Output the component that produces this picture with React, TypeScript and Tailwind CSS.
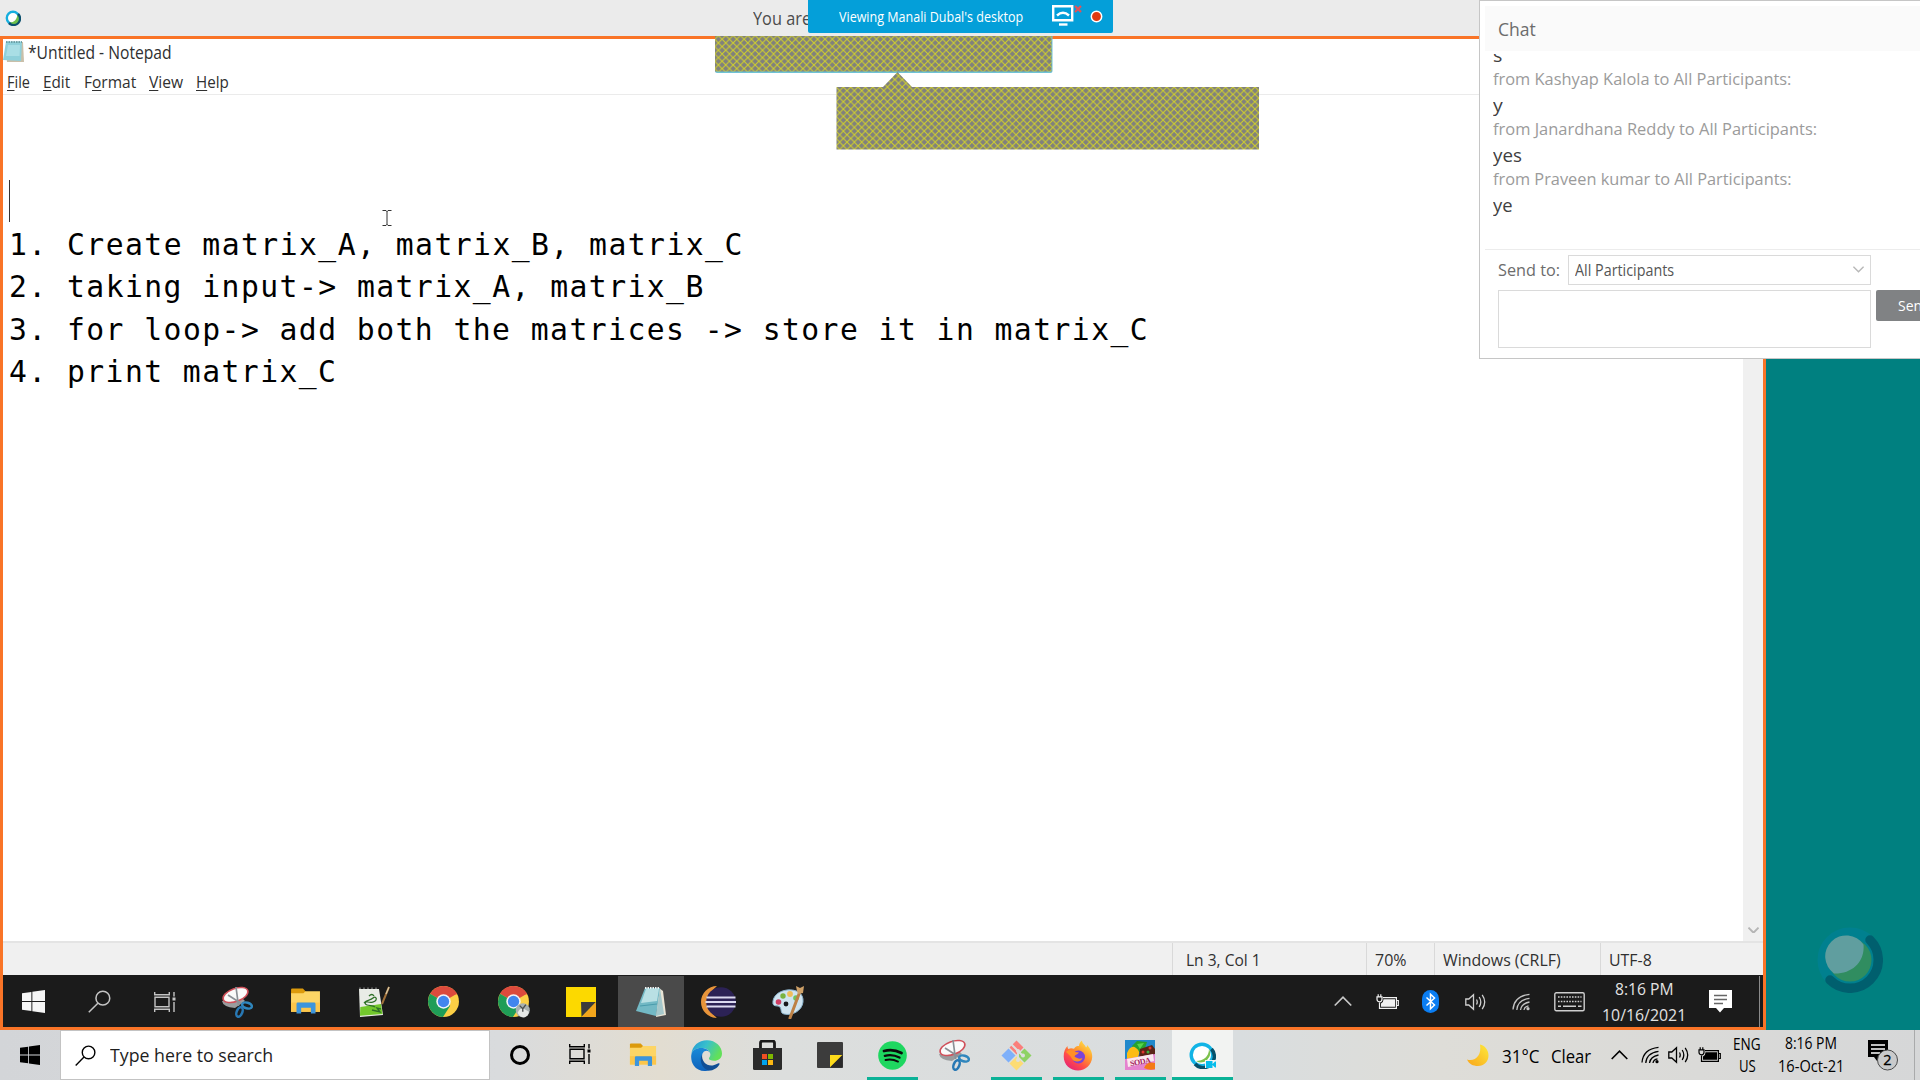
import React, { useLayoutEffect, useRef, useState } from "react";

/** Text stretched horizontally to an exact width. */
function Fit({ w, className = "", children }: { w: number; className?: string; children: React.ReactNode }) {
  const ref = useRef<HTMLSpanElement>(null);
  const [k, setK] = useState(1);
  useLayoutEffect(() => {
    if (ref.current && ref.current.offsetWidth) setK(w / ref.current.offsetWidth);
  }, [w]);
  return (
    <span className={"block shrink-0 " + className} style={{ width: w }}>
      <span ref={ref} className="inline-block origin-left whitespace-pre" style={{ transform: `scaleX(${k})` }}>
        {children}
      </span>
    </span>
  );
}

const WinLogo = ({ s, c }: { s: number; c: string }) => (
  <svg width={s} height={s} viewBox="0 0 24 24" fill={c}>
    <path d="M0 3.4 9.8 2v9.5H0zM10.8 1.9 24 0v11.5H10.8zM0 12.5h9.8V22L0 20.6zM10.8 12.5H24V24l-13.2-1.9z" />
  </svg>
);

const SearchGlyph = ({ s, c }: { s: number; c: string }) => (
  <svg width={s} height={s} viewBox="0 0 24 24" fill="none" stroke={c} strokeWidth="1.6">
    <circle cx="15.5" cy="8.5" r="7.2" />
    <path d="M10.3 13.8.8 23.3" />
  </svg>
);

const TaskView = ({ c }: { c: string }) => (
  <svg width="24" height="22" viewBox="0 0 24 22" fill="none" stroke={c} strokeWidth="1.4">
    <path d="M2 6.2h14v9.6H2zM1.7 1v2.8h14.6V1M1.7 21v-2.8h14.6V21M21 1v4.5M21 11v10" />
    <path d="M19.5 6.5h3v3h-3z" fill={c} stroke="none" />
  </svg>
);

const Snip = () => (
  <svg width="32" height="32" viewBox="0 0 32 32">
    <path d="M1 15q1 6 13 7l10-7-4-4z" fill="#9a9c9e" />
    <ellipse cx="14.5" cy="9" rx="13" ry="6.5" transform="rotate(-20 14.5 9)" fill="#fafafa" stroke="#d0505a" strokeWidth="1.6" />
    <path d="m15 1 2.5 19M7 9l14 9" stroke="#8b9096" strokeWidth="1.7" />
    <ellipse cx="26" cy="19.5" rx="5" ry="2.8" transform="rotate(15 26 19.5)" fill="none" stroke="#2f86bd" strokeWidth="2.5" />
    <ellipse cx="18.5" cy="26" rx="2.8" ry="5" transform="rotate(22 18.5 26)" fill="none" stroke="#2878b4" strokeWidth="2.5" />
  </svg>
);

const Folder = ({ s }: { s: number }) => (
  <svg width={s} height={s * 0.84} viewBox="0 0 30 25">
    <path d="M1 1.5Q1 .5 2 .5h10.5L15 3v3H1z" fill="#dc9a0c" />
    <path d="M1 5h12l2-2h14v20H1z" fill="#fdd565" />
    <path d="M1 14h28v9H1z" fill="#fcc64b" />
    <path d="M6.3 24.5v-9.2q0-1.3 1.3-1.3h15.800q1.300 0 1.300 1.300v9.200h-4.500v-5.500h-9.400v5.500z" fill="#3d95dc" />
  </svg>
);

const NotepadPP = () => (
  <svg width="32" height="32" viewBox="0 0 32 32">
    <path d="M1 3h20l4 26-23 2z" fill="#e9ece6" />
    <path d="M2.300 21 23 18l1.500 10-22.500 1.800z" fill="#72c72c" />
    <path d="M2 3v-1.500M6 3v-1.500M10 3v-1.500M14 3v-1.500M18 3v-1.500" stroke="#aaa" />
    <path d="M6 17c3-4 6-2 9-5 2-2 4 0 3 2s-5 3-8 2-4 2-1 3 6 0 8 2M11 10q3-3 5 0M14 24l8 2-3-4 4 1" stroke="#2f7028" strokeWidth="1.300" fill="none" />
    <path d="M31 1 24 18" stroke="#a1713a" strokeWidth="2" />
    <path d="m31 1-3 7" stroke="#d9c9a4" strokeWidth="1.300" />
  </svg>
);

const Chrome = ({ badge = false }: { badge?: boolean }) => (
  <svg width="33" height="33" viewBox="0 0 32 32">
    <circle cx="16" cy="16" r="15" fill="#fccf45" />
    <path d="M16 16 3 8.500A15 15 0 0 1 29 8.500z" fill="#dc4a3d" />
    <path d="M16 16 3 8.500A15 15 0 0 0 15.500 31l7-11z" fill="#1f9d57" />
    <path d="M16 9h13.300a15 15 0 0 0-4-4.700z" fill="#dc4a3d" />
    <circle cx="16" cy="16" r="7" fill="#f3f5f8" />
    <circle cx="16" cy="16" r="5.500" fill="#4285ee" />
    {badge && (
      <g>
        <circle cx="25" cy="24.500" r="6.800" fill="#a9b0b0" />
        <path d="M20 27q2-5 6-4l5 3q-1 5-5 5.500-4 0-6-4.500z" fill="#e6e8e6" />
        <path d="m22 20 3 3 3-4M25 23v3" stroke="#4c5050" strokeWidth="1.300" fill="none" />
      </g>
    )}
  </svg>
);

const StickyYellow = () => (
  <svg width="30" height="30" viewBox="0 0 30 30">
    <path d="M0 0h30v30H0z" fill="#fcd900" />
    <path d="M15 15h15L15.500 30z" fill="#3a3a3c" />
    <path d="M30 15v15H15.500z" fill="#f2a51c" />
  </svg>
);

const NotepadIcon = () => (
  <svg width="32" height="32" viewBox="0 0 32 32">
    <path d="M24 2 28 5 31 29 21 31z" fill="#e9e4d5" />
    <path d="M10 2 25 2 21 30 1 25z" fill="#73b9c5" />
    <path d="M11 3 24 3 22 15 6 17z" fill="#b9e0e4" />
    <path d="M21 30 25 2 29 28z" fill="#a6c8cb" />
    <path d="M10 2h15" stroke="#eef3f3" strokeWidth="2" strokeDasharray="1.500 1" />
    <path d="m5 20 17-2" stroke="#4a9cac" />
  </svg>
);

const Eclipse = () => (
  <svg width="36" height="34" viewBox="0 0 36 34">
    <path d="M16 1A16 16 0 0 0 16 33 20 20 0 0 1 16 1z" fill="#e8943a" />
    <circle cx="20" cy="17" r="14.800" fill="#2c2255" />
    <path d="M5.500 12.500h29M4.500 17h30.500M5.500 21.500h29" stroke="#dcdaf0" strokeWidth="2" />
  </svg>
);

const Paint = () => (
  <svg width="34" height="34" viewBox="0 0 34 34">
    <path d="M16 5C7 6 1 12 2 19c1 3 5 1 7 3 2 3 0 6 4 7 8 2 18-3 19-12S25 4 16 5z" fill="#cfe4f0" stroke="#8ab2cc" />
    <circle cx="7.500" cy="17" r="2.800" fill="#cf3e64" />
    <circle cx="12" cy="11" r="2.700" fill="#79b340" />
    <circle cx="19" cy="9" r="2.900" fill="#efbd5a" />
    <circle cx="25" cy="13" r="2.800" fill="#6fc25a" />
    <circle cx="15" cy="19" r="2.400" fill="#17191c" />
    <path d="M19 33 28 9" stroke="#bd8146" strokeWidth="3" strokeLinecap="round" />
    <path d="m26 6-1-5 4 2 4-2-1 7-5 1z" fill="#cfa168" />
  </svg>
);

const Chevron = ({ c, w, up = true, sw = 1.6 }: { c: string; w: number; up?: boolean; sw?: number }) => (
  <svg width={w} height={w / 1.7} viewBox="0 0 17 10" fill="none" stroke={c} strokeWidth={sw}>
    <path d={up ? "M.7 9 8.500 1.200 16.300 9" : "M.7 1 8.500 8.800 16.300 1"} />
  </svg>
);

const Battery = ({ c }: { c: string }) => (
  <svg width="23" height="16" viewBox="0 0 23 16" fill="none" stroke={c} strokeWidth="1.200">
    <path d="M7 3.600h13.400v10.800H3.500V8.500M20.500 6.500h1.800v5h-1.800" />
    <path d="M7.500 5.200H19v7.600H5V9.500q2.500-1 2.500-4.300z" fill={c} stroke="none" />
    <path d="M1 2.800h5v2.500q0 2.500-2.500 2.500T1 5.300zM2.200.3v2.500M4.800.3v2.500" />
  </svg>
);

const Speaker = ({ c }: { c: string }) => (
  <svg width="22" height="18" viewBox="0 0 22 18" fill="none" stroke={c} strokeWidth="1.300">
    <path d="M.8 6h3L8.500 1.800v14.400L3.800 12h-3z" />
    <path d="M11.500 6.500q1.500 2.500 0 5M14.200 4q3.200 5 0 10M17.200 1.800q5 7.200 0 14.400" />
  </svg>
);

const Wifi = ({ c }: { c: string }) => (
  <svg width="19" height="18" viewBox="0 0 19 18" fill="none" stroke={c} strokeWidth="1.300">
    <path d="M1 16.500Q2 3 17.500 1.300M4.800 17Q5.500 7 17.500 5.300M8.500 17Q9.500 10.500 17.500 9M12 17Q12.500 13.500 16.500 12.800" />
    <circle cx="16" cy="15.700" r="1.600" fill={c} stroke="none" />
  </svg>
);

const Bluetooth = () => (
  <svg width="17" height="23" viewBox="0 0 17 23">
    <rect width="17" height="23" rx="8.500" fill="#0a7df2" />
    <path d="m4.500 7.500 8 7.500-4 3.800V4.200l4 3.800-8 7.500" fill="none" stroke="#fff" strokeWidth="1.500" />
  </svg>
);

const Keyboard = () => (
  <svg width="31" height="20" viewBox="0 0 31 20" fill="none" stroke="#cfcfcf">
    <rect x=".8" y=".8" width="29.400" height="18" rx="1.500" strokeWidth="1.400" />
    <path d="M4 5h23.500M4 9.500h23.500" strokeWidth="1.500" strokeDasharray="1.600 1.200" />
    <path d="M4 14.300h3M9 14.300h13M24 14.300h3.500" strokeWidth="1.500" />
  </svg>
);

const Edge = () => (
  <svg width="31" height="31" viewBox="0 0 32 32">
    <defs>
      <linearGradient id="edgeTop" x1="0" y1="0" x2="1" y2=".4">
        <stop offset="0" stopColor="#2296d6" />
        <stop offset=".5" stopColor="#38c0cc" />
        <stop offset="1" stopColor="#62e05a" />
      </linearGradient>
      <linearGradient id="edgeLow" x1="0" y1="0" x2="0" y2="1">
        <stop offset="0" stopColor="#1a8ad8" />
        <stop offset="1" stopColor="#0f62bb" />
      </linearGradient>
    </defs>
    <path d="M.4 15C1 6 8 .3 16.500.3 25.500.3 32 7 32 14c0 5-4 7.500-8 7.500-3.500 0-5.500-1-5.500-2.300 0-1 1.500-1.700 1.500-4.200C20 11 16 8.200 11 8.200 5 8.200 1 11 .4 15z" fill="url(#edgeTop)" />
    <path d="M.3 15.500C1 11 5 8.300 10.500 8.300c5 0 9.500 2.700 9.500 6.700 0-2.500-2-3.800-4-3.800-3 0-4.800 3-4.800 6.500 0 7 6 12 13 11.300C17 34 7 32.500 3 26.500.8 23.500-.2 19.500.3 15.500z" fill="url(#edgeLow)" />
    <path d="M11.500 15c-1 8 6 13 12.500 10.800 2-.7 3.500-1.500 4.500-1.800.8-.2 1.200.5.800 1.200-2 3.500-6 6.300-11 6.300C11 30 8 20 11.500 15z" fill="#114f96" />
  </svg>
);

const Store = () => (
  <svg width="29" height="30" viewBox="0 0 29 30">
    <path d="M7.500 9V3q0-2 2-2h10q2 0 2 2v6" fill="none" stroke="#1a1a1a" strokeWidth="2.800" />
    <path d="M0 8h29v20.500q0 1.500-1.500 1.500h-26Q0 30 0 28.500z" fill="#2b2b2b" />
    <path d="M9 14h5v5H9z" fill="#f04e23" />
    <path d="M15 14h5v5h-5z" fill="#7db700" />
    <path d="M9 20h5v5H9z" fill="#00a3ee" />
    <path d="M15 20h5v5h-5z" fill="#fdb813" />
  </svg>
);

const StickyDark = () => (
  <svg width="26" height="26" viewBox="0 0 26 26">
    <rect width="26" height="26" rx="1" fill="#3c3c3c" />
    <path d="M13 13h12.500L13 25.500z" fill="#fddb1b" />
    <path d="M25.500 13v12.500H13z" fill="#2a2a2a" />
  </svg>
);

const Spotify = () => (
  <svg width="29" height="29" viewBox="0 0 29 29" fill="none" stroke="#0b0b0b" strokeLinecap="round">
    <circle cx="14.500" cy="14.500" r="14.300" fill="#1ed760" stroke="none" />
    <path d="M6 10q9-2.500 17.500 2" strokeWidth="2.800" />
    <path d="M6.800 14.800q7.700-2 14.700 1.800" strokeWidth="2.300" />
    <path d="M7.500 19q6.500-1.500 12.500 1.600" strokeWidth="1.900" />
  </svg>
);

const Git = () => (
  <svg width="31" height="31" viewBox="0 0 31 31">
    <path d="m15.500.5 7 7-7 7-7-7z" fill="#fa7f7b" />
    <path d="m7.500 8.500 7 7-7 7-7-7z" fill="#7eb0fa" />
    <path d="m23.500 8.500 7 7-7 7-7-7z" fill="#8ed265" />
    <path d="m15.500 16.500 7 7-7 7-7-7z" fill="#fddc74" />
    <path d="m10 4 7 7v9M17 11l5 5" stroke="#dcdfde" strokeWidth="2" fill="none" />
    <circle cx="17" cy="11" r="2" fill="#dcdfde" />
    <circle cx="22" cy="15.500" r="2" fill="#dcdfde" />
    <circle cx="17" cy="20" r="2" fill="#dcdfde" />
  </svg>
);

const Firefox = () => (
  <svg width="30" height="31" viewBox="0 0 30 31">
    <defs>
      <linearGradient id="fox" x1=".9" y1="0" x2=".2" y2="1">
        <stop offset="0" stopColor="#fff04a" />
        <stop offset=".4" stopColor="#ff9a2e" />
        <stop offset=".7" stopColor="#ff4a4a" />
        <stop offset="1" stopColor="#e3207a" />
      </linearGradient>
    </defs>
    <path d="M19 .5c0 3 3 4 4 7 1-.5 1-1.500 1-2.500 3 3 5.500 7.500 5.200 12C28.700 25 22.500 30.500 15 30.500S.7 25 .7 16.500C.7 12 2 8.500 4.500 6c0 1.500.3 2.200 1 3 1.500-1.200 4-1 5.500-.2C12 6.500 14 6 16 6c0-2 1-4 3-5.500z" fill="url(#fox)" />
    <circle cx="15.500" cy="17" r="6.500" fill="#7a43d8" />
    <path d="M3 12c3-3 7-2 9 0l4 .500c-1 2-4 2-4.500 4 3 2 5 3 8 1.500-1.500 4.500-9 5-11 0C7 15 5 14 3 12z" fill="#ff8f26" />
  </svg>
);

const Candy = () => (
  <svg width="30" height="30" viewBox="0 0 30 30">
    <path d="M0 0h30v30H0z" fill="#2189cc" />
    <path d="m7 6 5-5 10 1-3 9-9 2z" fill="#27a22f" />
    <path d="m12 4 7-1-4 6z" fill="#57d44d" />
    <path d="M2 13q4-9 9-5 5 3 2 9l-11 3z" fill="#fcbc16" />
    <path d="m15 9 12-4 3 4v8l-16 1z" fill="#5a2417" />
    <circle cx="18" cy="12" r="1.500" fill="#e2352f" />
    <circle cx="23" cy="12" r="1.500" fill="#3fae3d" />
    <circle cx="25" cy="8" r="1.500" fill="#e2352f" />
    <path d="M0 19 30 14v16H0z" fill="#e583cf" />
    <path d="M2 19 28 14l1 7-26 6z" fill="#fbe8ef" />
    <text x="5" y="24.500" fontSize="8" fontWeight="700" fill="#a4235f" fontFamily="Liberation Serif, serif" transform="rotate(-10 15 22)" textLength="21">SODA</text>
    <path d="M19 28q3-7 11-5v6q-5 2-11-1z" fill="#f47a16" />
  </svg>
);

const WebexApp = () => (
  <svg width="27" height="27" viewBox="0 0 27 27">
    <circle cx="13" cy="13" r="10.800" fill="#fff" stroke="#12b4e6" strokeWidth="3.400" />
    <path d="M22.500 7A11 11 0 0 1 6 22" fill="none" stroke="#07516b" strokeWidth="3.400" />
    <path d="M20 7c0 8-6 12-13 12a9.200 9.200 0 0 0 13-12z" fill="#7cc14c" />
    <path d="M16 18h12v8H16z" fill="#f2f3f2" />
    <path d="M17 19h6.500v7H17zM23.500 22l2.500-2.500h1v6h-1L23.500 23z" fill="#05bceb" />
  </svg>
);

const Moon = () => (
  <svg width="24" height="23" viewBox="0 0 24 23">
    <defs>
      <linearGradient id="moon" x1="1" y1="0" x2="0" y2="1">
        <stop offset="0" stopColor="#fde93b" />
        <stop offset="1" stopColor="#f9a51b" />
      </linearGradient>
    </defs>
    <path d="M14 .5c4.500 1 8.500 5 8.500 11C22.500 17.500 18 22 12 22 7 22 3 20 1 15.500c8 2.500 15-4 13-15z" fill="url(#moon)" />
  </svg>
);

const WebexBall = () => (
  <svg width="66" height="66" viewBox="0 0 66 66">
    <circle cx="33" cy="33" r="27" fill="#308d60" stroke="#00808f" strokeWidth="11" />
    <path d="M53 13A28 28 0 0 1 13 53" fill="none" stroke="#005f6e" strokeWidth="9.500" strokeLinecap="round" />
    <path d="M46.500 17.500A21 21 0 1 0 17 46.500C35 47 48 35 46.500 17.500z" fill="#609e9f" />
  </svg>
);

const WebexSmall = () => (
  <svg width="16" height="16" viewBox="0 0 16 16">
    <circle cx="8" cy="8" r="6.200" fill="#fff" stroke="#16aede" strokeWidth="2.400" />
    <path d="M13 4A6.300 6.300 0 0 1 4 13" fill="none" stroke="#0b4f6d" strokeWidth="2.600" />
    <path d="M12.300 5A5 5 0 0 1 5 12.500c4 0 7-3 7.300-7.500z" fill="#6fbf4a" />
  </svg>
);

function Cell({ className = "", children }: { className?: string; children?: React.ReactNode }) {
  return <div className={"relative flex h-full shrink-0 items-center justify-center " + className}>{children}</div>;
}

const Underline = () => <div className="absolute bottom-0 left-[6px] h-[3px] w-[51px] bg-[#0bb297]" />;

const notes: [string, number][] = [
  ["1. Create matrix_A, matrix_B, matrix_C", 38],
  ["2. taking input-> matrix_A, matrix_B", 36],
  ["3. for loop-> add both the matrices -> store it in matrix_C", 59],
  ["4. print matrix_C", 17],
];

const messages: [string, number, boolean][] = [
  ["from Kashyap Kalola to All Participants:", 298, true],
  ["y", 10, false],
  ["from Janardhana Reddy to All Participants:", 324, true],
  ["yes", 29, false],
  ["from Praveen kumar to All Participants:", 299, true],
  ["ye", 20, false],
];

function Notepad() {
  return (
    <div className="flex h-[936px] flex-col bg-white text-[#303030]">
      <div className="flex h-[29px] items-start pt-px">
        <svg width="23" height="24" viewBox="0 0 23 24">
          <path d="M3 2h17l1 20H4z" fill="#c9bfa9" />
          <path d="M3 1.500h16l-1 19.500L0 20z" fill="#8fd0da" />
          <path d="M5 5h12l-.5 11L3 16z" fill="#a9dee5" />
          <path d="M3 2h16" stroke="#5d8f94" strokeWidth="1.500" strokeDasharray="1.500 1" />
        </svg>
        <Fit w={144} className="ml-[2px] text-[17.500px] leading-[25px]">*Untitled - Notepad</Fit>
      </div>
      <div className="flex h-[27px] border-b border-[#ebebeb] pl-[4px] text-[17px] leading-[29px]">
        <Fit w={23} className="-mt-[1px]"><u className="underline-offset-2">F</u>ile</Fit>
        <Fit w={27} className="-mt-[1px] ml-[13px]"><u className="underline-offset-2">E</u>dit</Fit>
        <Fit w={52} className="-mt-[1px] ml-[14px]">F<u className="underline-offset-2">o</u>rmat</Fit>
        <Fit w={34} className="-mt-[1px] ml-[13px]"><u className="underline-offset-2">V</u>iew</Fit>
        <Fit w={33} className="-mt-[1px] ml-[13px]"><u className="underline-offset-2">H</u>elp</Fit>
      </div>
      <div className="flex min-h-0 flex-1">
        <div className="relative flex-1 pl-[5.500px] pt-[128px] font-['DejaVu_Sans_Mono',monospace] text-[31px] text-black">
          <div className="absolute left-[6px] top-[85px] h-[42px] w-px bg-[#333]" />
          <svg className="absolute left-[379px] top-[115px]" width="10" height="16" viewBox="0 0 10 16" fill="none" stroke="#333">
            <path d="M.5.5H4L5 1.500 6 .5h3.500M5 1v14M.5 15.500H4L5 14.500l1 1h3.500" />
          </svg>
          {notes.map(([t, n]) => (
            <Fit key={t} w={n * 19.33} className="h-[42.330px] leading-[42.330px] tracking-[1.500px]">{t}</Fit>
          ))}
        </div>
        <div className="flex w-[20px] items-end justify-center bg-[#f0f0f0] pb-[8px]">
          <Chevron c="#b5b5b5" w={11} up={false} sw={3} />
        </div>
      </div>
      <div className="flex h-[34px] border-t-2 border-[#e4e4e4] bg-[#f0f0f0] text-[17px] leading-[34px]">
        <div className="w-[1169px]" />
        <div className="w-[194px] border-l border-[#d9d9d9] pl-[13px]"><Fit w={75}>Ln 3, Col 1</Fit></div>
        <div className="w-[68px] border-l border-[#d9d9d9] pl-[8px]"><Fit w={32}>70%</Fit></div>
        <div className="w-[166px] border-l border-[#d9d9d9] pl-[8px]"><Fit w={118}>Windows (CRLF)</Fit></div>
        <div className="border-l border-[#d9d9d9] pl-[8px]"><Fit w={43}>UTF-8</Fit></div>
      </div>
    </div>
  );
}

function RemoteTaskbar() {
  return (
    <div className="flex h-[52px] bg-[#1b1b1b] pt-px text-[#e2e2e2]">
      <Cell className="w-[60px]"><WinLogo s={23} c="#f5f5f5" /></Cell>
      <Cell className="w-[72px]"><SearchGlyph s={23} c="#c4c4c4" /></Cell>
      <Cell className="w-[60px]"><TaskView c="#c4c4c4" /></Cell>
      <Cell className="w-[84px]"><Snip /></Cell>
      <Cell className="w-[52px]"><Folder s={31} /></Cell>
      <Cell className="w-[86px]"><NotepadPP /></Cell>
      <Cell className="w-[52px]"><Chrome /></Cell>
      <Cell className="w-[88px]"><Chrome badge /></Cell>
      <Cell className="w-[48px]"><StickyYellow /></Cell>
      <Cell className="ml-[13px] w-[66px] bg-[#4a4a4a]"><NotepadIcon /></Cell>
      <Cell className="w-[69px]"><Eclipse /></Cell>
      <Cell className="w-[70px]"><Paint /></Cell>
      <div className="flex-1" />
      <Cell className="w-[46px]"><Chevron c="#c8c8c8" w={18} /></Cell>
      <Cell className="w-[42px]"><Battery c="#f2f2f2" /></Cell>
      <Cell className="w-[44px]"><Bluetooth /></Cell>
      <Cell className="w-[47px]"><Speaker c="#d0d0d0" /></Cell>
      <Cell className="w-[45px]"><Wifi c="#c4c4c4" /></Cell>
      <Cell className="w-[50px]"><Keyboard /></Cell>
      <Cell className="w-[100px] flex-col text-[17px] leading-[26px]">
        <Fit w={59}>8:16 PM</Fit>
        <Fit w={84}>10/16/2021</Fit>
      </Cell>
      <Cell className="w-[52px]">
        <svg width="23" height="23" viewBox="0 0 23 23">
          <path d="M0 0h23v18h-8l-4 4.500L7 18H0z" fill="#fff" />
          <path d="M5 5.500h13M5 9.500h13M5 13.500h9" stroke="#666" strokeWidth="1.300" />
        </svg>
      </Cell>
      <div className="ml-[13px] mr-[3px] w-px bg-[#8a8a8a]" />
    </div>
  );
}

function HostTaskbar() {
  return (
    <div className="flex h-[50px] bg-[linear-gradient(90deg,#d3d5d8_0px,#d9dbdd_500px,#e2ddd1_660px,#dcdedd_780px,#d9dddf_1240px,#deddd8_1440px,#dadad8_1700px,#d6d7d8_1920px)] text-black">
      <Cell className="w-[60px]"><WinLogo s={20} c="#000" /></Cell>
      <div className="flex w-[430px] items-center border border-[#c3c3c3] bg-white pl-[14px] text-[#1e1e1e]">
        <SearchGlyph s={21} c="#000" />
        <Fit w={163} className="ml-[14px] text-[18.500px] leading-[48px]">Type here to search</Fit>
      </div>
      <Cell className="w-[60px]"><div className="size-[20px] rounded-full border-[3px] border-black" /></Cell>
      <Cell className="w-[60px] pb-[2px]"><TaskView c="#000" /></Cell>
      <Cell className="ml-[1px] w-[64px]"><Folder s={28} /></Cell>
      <Cell className="w-[62px]"><Edge /></Cell>
      <Cell className="w-[61px]"><Store /></Cell>
      <Cell className="w-[63px]"><StickyDark /></Cell>
      <Cell className="w-[62px]"><Spotify /><Underline /></Cell>
      <Cell className="w-[62px]"><Snip /></Cell>
      <Cell className="w-[62px]"><Git /><Underline /></Cell>
      <Cell className="w-[62px]"><Firefox /><Underline /></Cell>
      <Cell className="w-[62px]"><Candy /><Underline /></Cell>
      <Cell className="ml-[1px] w-[61px] border-b-[3px] border-[#0bb297] bg-[#f2f3f2] pt-[3px]"><WebexApp /></Cell>
      <div className="flex-1" />
      <Cell className="w-[34px]"><Moon /></Cell>
      <Fit w={38} className="ml-[7px] text-[17.500px] leading-[52px]">31°C</Fit>
      <Fit w={40} className="ml-[11px] text-[17.500px] leading-[52px]">Clear</Fit>
      <Cell className="ml-[11px] w-[34px]"><Chevron c="#000" w={17} /></Cell>
      <Cell className="w-[28px]"><Wifi c="#000" /></Cell>
      <Cell className="w-[30px]"><Speaker c="#000" /></Cell>
      <Cell className="w-[30px]"><Battery c="#000" /></Cell>
      <Cell className="ml-[6px] w-[34px] flex-col text-[15.500px] leading-[22px]">
        <Fit w={28}>ENG</Fit>
        <Fit w={17}>US</Fit>
      </Cell>
      <Cell className="ml-[10px] w-[74px] flex-col text-[15.500px] leading-[23px]">
        <Fit w={52}>8:16 PM</Fit>
        <Fit w={66}>16-Oct-21</Fit>
      </Cell>
      <Cell className="ml-[12px] w-[44px]">
        <svg width="32" height="32" viewBox="0 0 32 32">
          <path d="M2 1h20v17h-7l-4 4-3-4H2z" fill="#000" />
          <path d="M5 6h14M5 10h14M5 14h9" stroke="#fff" strokeWidth="1.300" />
          <circle cx="21.500" cy="21" r="10" fill="#c9cacb" stroke="#4a4a4a" />
          <text x="21.500" y="26" textAnchor="middle" fontSize="14.500" fontFamily="Open Sans, sans-serif" fill="#000" stroke="#000" strokeWidth=".3">2</text>
        </svg>
      </Cell>
      <div className="ml-[10px] mr-[5px] w-px bg-[#a9aaab]" />
    </div>
  );
}

function Chat() {
  return (
    <div className="absolute left-[1479px] top-0 flex h-[359px] w-[520px] flex-col border border-[#c6c6c6] bg-white pl-[5px] pt-[5px]">
      <div className="h-[45px] shrink-0 bg-[#fafafa] pl-[13px] text-[18px] leading-[47px] text-[#6c6c6c]">
        <Fit w={38}>Chat</Fit>
      </div>
      <div className="mt-[3px] h-[196px] shrink-0 overflow-hidden border-b border-[#ececec] pl-[8px]">
        <div className="-mt-[11px] h-[25px] text-[17.500px] leading-[25px] text-[#3f3f3f]"><Fit w={9}>s</Fit></div>
        {messages.map(([t, w, meta]) => (
          <div key={t} className={meta ? "h-[25px] text-[16.500px] leading-[21px] text-[#9b9b9b]" : "h-[25px] text-[17.500px] leading-[25px] text-[#3f3f3f]"}>
            <Fit w={w}>{t}</Fit>
          </div>
        ))}
      </div>
      <div className="mt-[4px] flex h-[31px] shrink-0 items-center pl-[13px]">
        <Fit w={62} className="text-[16.500px] leading-[30px] text-[#6c6c6c]">Send to:</Fit>
        <div className="ml-[8px] flex h-[30px] w-[303px] items-center justify-between border border-[#dadada] pl-[6px] pr-[6px]">
          <Fit w={99} className="text-[15.500px] leading-[28px] text-[#555]">All Participants</Fit>
          <Chevron c="#b8b8b8" w={11} up={false} sw={2.2} />
        </div>
      </div>
      <div className="mt-[5px] flex pl-[13px]">
        <div className="h-[58px] w-[373px] border border-[#dadada]" />
        <div className="ml-[5px] h-[31px] w-[80px] rounded-[2px] bg-[#808284] pl-[22px] text-[14px] leading-[31px] text-white">
          <Fit w={33}>Send</Fit>
        </div>
      </div>
    </div>
  );
}

function MaskedPanels() {
  return (
    <svg className="absolute left-[714px] top-[36px]" width="546" height="114" viewBox="714 36 546 114">
      <defs>
        <pattern id="hatch" width="7.350" height="7.350" x="836" y="87" patternUnits="userSpaceOnUse">
          <path d="M0 0h7.350v7.350H0z" fill="#80807e" />
          <path d="M-1-1 8.350 8.350M8.350-1-1 8.350" stroke="#cfcf2c" strokeWidth="1.100" />
        </pattern>
      </defs>
      <path d="M715 36h337.500v35a2 2 0 0 1-2 2H717a2 2 0 0 1-2-2z" fill="#6fc3d6" />
      <path d="M715 36h336.500v35.500H715z" fill="url(#hatch)" />
      <path d="M836.500 87h46.500l14.500-15L912 87h347v62.500H836.500z" fill="url(#hatch)" />
    </svg>
  );
}

export default function App() {
  return (
    <div className="relative flex h-[1080px] w-[1920px] flex-col overflow-hidden bg-white font-['Open_Sans','Noto_Sans',sans-serif]">
      <div className="flex h-[36px] items-center bg-[#ebebeb] pl-[4.500px]">
        <WebexSmall />
        <Fit w={58} className="ml-[732px] text-[18px] leading-[36px] text-[#4b4b4b]">You are</Fit>
      </div>
      <div className="flex h-[994px]">
        <div className="w-[1766px] border-[3px] border-[#f97427]">
          <Notepad />
          <RemoteTaskbar />
        </div>
        <div className="flex flex-1 items-end bg-[#008080] pb-[37px] pl-[51px]">
          <WebexBall />
        </div>
      </div>
      <HostTaskbar />

      <MaskedPanels />
      <div className="absolute left-[808px] top-0 flex h-[33px] w-[305px] items-center rounded-b-[2px] bg-[#049fd9] pl-[31px]">
        <Fit w={184} className="text-[14.500px] leading-[33px] text-white">Viewing Manali Dubal's desktop</Fit>
        <svg className="ml-[28px]" width="62" height="26" viewBox="0 0 62 26" fill="none">
          <path d="M2.200 2.200h19v14h-19z" stroke="#fff" strokeWidth="2.400" />
          <path d="M8 20.500h8.500" stroke="#fff" strokeWidth="2.400" />
          <path d="M6 11.500q6-5.500 12 0" stroke="#fff" strokeWidth="2.400" />
          <path d="m24 2 6 6M30 2l-6 6" stroke="#e0525a" strokeWidth="2.200" />
          <circle cx="45.500" cy="12.500" r="5.200" fill="#e03a12" stroke="#fff" strokeWidth="1.500" />
        </svg>
      </div>
      <Chat />
    </div>
  );
}
